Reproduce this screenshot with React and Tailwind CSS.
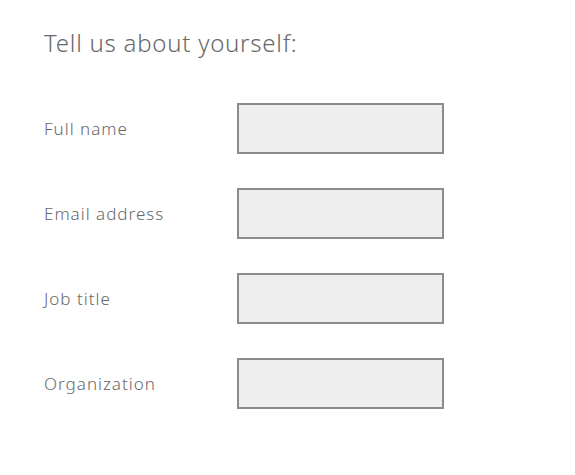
const FIELDS = ['Full name', 'Email address', 'Job title', 'Organization']

export default function App() {
  return (
    <div className="w-[575px] h-[475px] bg-white text-[#686868] font-['Noto_Sans',sans-serif] px-[44px] pt-[24px]">
      <h1 className="text-[24px] leading-[38px] font-light tracking-[0.75px]">Tell us about yourself:</h1>

      <div className="mt-[41px] flex flex-col gap-[34px]">
        {FIELDS.map((label) => (
          <div key={label} className="flex items-center">
            <label className="w-[193px] text-[17px] font-light tracking-[1px]">{label}</label>
            <input className="w-[207px] h-[51px] bg-[#eeeeee] border-2 border-[#8c8c8c] outline-none" />
          </div>
        ))}
      </div>
    </div>
  )
}
